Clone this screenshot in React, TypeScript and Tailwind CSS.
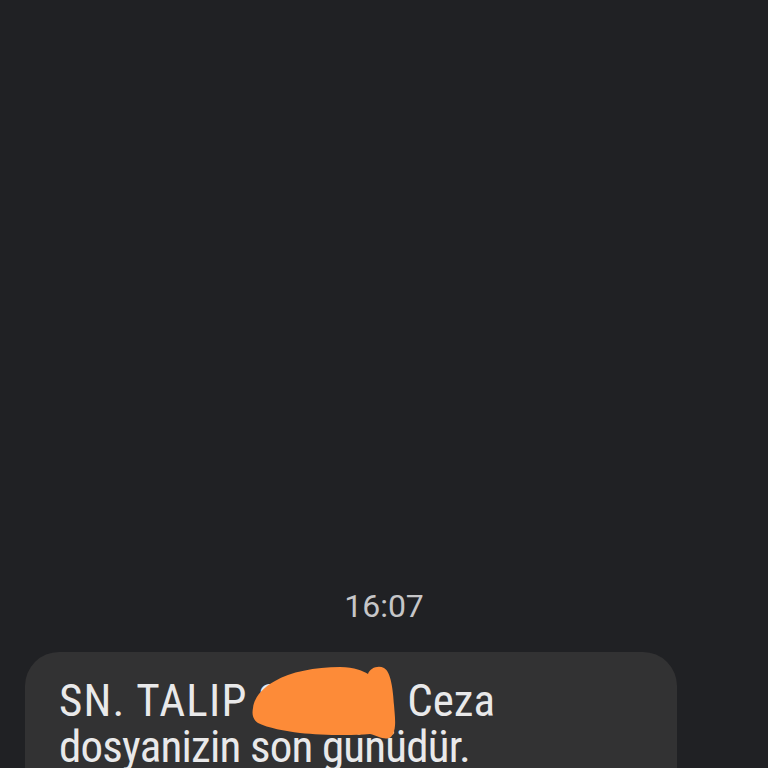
export default function App() {
  return (
    <div className="h-[768px] w-[768px] overflow-hidden bg-[#202124] font-['Roboto','Liberation_Sans',sans-serif]">
      <div className="pt-[586px]">
        {/* time */}
        <div className="text-center text-[32px] leading-[40px] text-[#c6c6c8]">16:07</div>

        {/* message bubble */}
        <div className="relative mt-[26px] ml-[25px] w-[652px] rounded-[34px] bg-[#323233] pt-[26px] pb-8 pl-[34px] pr-8">
          <p className="font-['Liberation_Sans_Narrow','Roboto_Condensed','Roboto',sans-serif] text-[45px] leading-[46px] text-[#e9e9ea]">
            <span className="tracking-[1.2px]">SN. TALIP</span> <span className="inline-block w-[139px]">S</span> Ceza{' '}
            <span className="tracking-[-0.8px]">dosyanizin son günüdür.</span>
          </p>
          {/* redaction scribble */}
          <svg
            className="absolute left-[215px] top-[3px]"
            width="170"
            height="95"
            viewBox="240 655 170 95"
          >
            <path
              d="M253 708 C 254 698, 262 688, 275 681 C 290 672, 315 667, 340 667 C 355 667, 363 671, 368 674 C 370 668, 378 665, 384 668 C 391 672, 393 690, 394 705 C 395 718, 397 730, 391 737 C 385 741, 378 736, 370 734 C 350 736, 320 735, 300 733 C 285 731, 268 728, 258 723 C 252 719, 252 713, 253 708 Z"
              fill="#fd8b38"
            />
          </svg>
        </div>
      </div>
    </div>
  )
}
